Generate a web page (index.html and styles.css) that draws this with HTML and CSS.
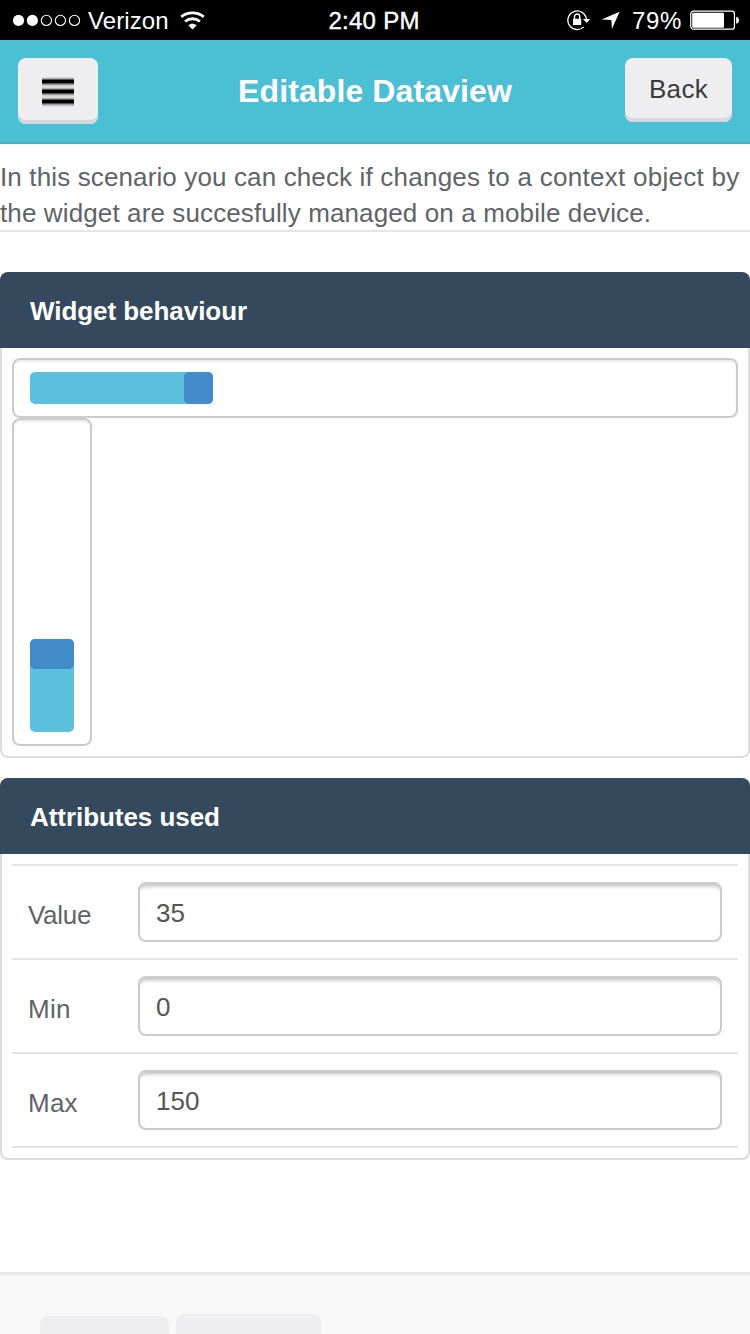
FILE: index.html
```html
<!DOCTYPE html>
<html lang="en">
<head>
<meta charset="utf-8">
<title>Editable Dataview</title>
<link rel="stylesheet" href="styles.css">
</head>
<body>
<div class="status">
  <div class="status-left">
    <svg class="signal" width="70" height="14" viewBox="0 0 70 14"><g fill="#fff"><circle cx="6.5" cy="7.4" r="5.6"/><circle cx="20.4" cy="7.4" r="5.6"/></g><g fill="none" stroke="#fff" stroke-width="1.1"><circle cx="34.4" cy="7.4" r="5.1"/><circle cx="48.4" cy="7.4" r="5.1"/><circle cx="62.5" cy="7.4" r="5.1"/></g></svg>
    <span class="carrier">Verizon</span>
    <svg class="wifi" width="26" height="19" viewBox="0 0 26 19" fill="none" stroke="#fff" stroke-width="2.8"><path d="M1.2 5.9C7.5 .6 17.5 .6 23.8 5.9M5.1 10.5C9.5 6.8 15.5 6.8 19.9 10.5"/><path d="M12.5 18.4 8.3 14.2C10.7 12.1 14.3 12.1 16.7 14.2Z" fill="#fff" stroke="none"/></svg>
  </div>
  <span class="time">2:40 PM</span>
  <div class="status-right">
    <svg class="lock" width="24" height="22" viewBox="0 0 24 22" fill="none" stroke="#fff"><path d="M16.7 17.9A9.3 9.3 0 1 1 19.4 10.1" stroke-width="1.3"/><path d="M16 9.9h7.2l-3.6 4.2Z" fill="#fff" stroke="none"/><path d="M6 9.7h8.2v6.3H6Z" fill="#fff" stroke="none"/><path d="M7.5 10.5V7.6a2.6 2.6 0 0 1 5.2 0V10.5" stroke-width="1.4"/></svg>
    <svg class="arrow" width="19" height="18" viewBox="0 0 19 18"><path d="M18.6.8 10.9 18 10.4 9 .6 8.5Z" fill="#fff"/></svg>
    <span class="percent">79%</span>
    <svg class="battery" width="50" height="20" viewBox="0 0 50 20"><rect x=".75" y="1.2" width="43.7" height="18" rx="2.8" fill="none" stroke="#fff" stroke-width="1.2"/><rect x="2.2" y="2.8" width="31.8" height="14.9" rx="1" fill="#fff"/><path d="M46.2 6.8Q48.9 7.3 48.9 10.3T46.2 13.8Z" fill="#fff"/></svg>
  </div>
</div>
<header class="header">
  <button class="btn menu" aria-label="Menu"><span class="bar"></span><span class="bar"></span><span class="bar"></span></button>
  <h1 class="title">Editable Dataview</h1>
  <button class="btn back">Back</button>
</header>
<main class="content">
  <p class="intro"><span class="intro-a">In this scenario you can check if </span><span class="intro-b">changes to a context object by</span><br><span class="intro-c">the widget are succesfully managed on a mobile device.</span></p>
  <section class="panel">
    <h2 class="heading">Widget behaviour</h2>
    <div class="body">
      <div class="slider horizontal"><div class="fill"><div class="handle"></div></div></div>
      <div class="slider vertical"><div class="fill"><div class="handle"></div></div></div>
    </div>
  </section>
  <section class="panel">
    <h2 class="heading">Attributes used</h2>
    <div class="body">
      <div class="rows">
        <label class="row"><span class="label label-value">Value</span><input class="input" value="35"></label>
        <label class="row"><span class="label">Min</span><input class="input" value="0"></label>
        <label class="row"><span class="label">Max</span><input class="input" value="150"></label>
      </div>
    </div>
  </section>
</main>
<footer class="footer"><div class="tab tab-first"></div><div class="tab tab-second"></div></footer>
</body>
</html>
```

FILE: styles.css
```css
* { box-sizing: border-box; }
html, body { height: 100%; }
body {
  margin: 0;
  display: flex;
  flex-direction: column;
  height: 1334px;
  overflow: hidden;
  background: #fff;
  color: #606468;
  font: 26px/36px "Liberation Sans", Arial, sans-serif;
}
svg { display: block; flex: none; }
.status {
  flex: none;
  height: 40px;
  display: grid;
  grid-template-columns: 1fr auto 1fr;
  padding: 0 10px 0 12px;
  background: #000;
  color: #fff;
  font-size: 24px;
  line-height: 40px;
  white-space: nowrap;
}
.status-left, .status-right { display: flex; align-items: center; height: 40px; }
.status-right { justify-content: flex-end; }
.carrier { width: 80px; margin-left: 6px; padding-top: 2px; letter-spacing: .1px; }
.wifi { margin-left: 12px; }
.time { width: 95px; padding-top: 1px; letter-spacing: .25px; -webkit-text-stroke: .4px #fff; }
.lock { margin-right: 10px; }
.arrow { margin-right: 12px; }
.percent { width: 50px; margin-right: 8px; padding-top: 2px; letter-spacing: .7px; }
.header {
  flex: none;
  height: 104px;
  display: flex;
  justify-content: space-between;
  align-items: flex-start;
  padding: 18px 18px 0;
  background: #4bbfd3;
  border-bottom: 2px solid #3eb3c8;
}
.title {
  margin: 0 0 0 27px;
  color: #fff;
  font-size: 32px;
  line-height: 66px;
  letter-spacing: .1px;
  white-space: nowrap;
}
.btn {
  border: 0;
  border-radius: 8px;
  background: #eeeef0;
  box-shadow: inset 0 -4px #d7d7de;
  color: #3a3a3d;
  font: 26px/60px "Liberation Sans", Arial, sans-serif;
}
.menu {
  width: 80px;
  height: 66px;
  display: flex;
  flex-direction: column;
  align-items: center;
  padding: 19px 0 0;
}
.bar {
  width: 32px;
  height: 10px;
  background: linear-gradient(#ddd 0 1px, #555 2.5px, #000 3px 6px, #555 6.5px, #bbb 8px, #ddd 9px);
}
.back { width: 107px; height: 64px; padding: 0 0 2px; letter-spacing: .35px; }
.content { flex: none; height: 1128px; padding-top: 15px; }
.intro { margin: 0 0 40px; height: 73px; border-bottom: 2px solid #e5e5e5; white-space: nowrap; }
.intro-a { letter-spacing: .13px; }
.intro-b { letter-spacing: .27px; }
.intro-c { letter-spacing: .12px; }
.panel {
  margin-bottom: 20px;
  border: 2px solid #ddd;
  border-top: 0;
  border-radius: 8px;
}
.heading {
  height: 76px;
  margin: 0 -2px;
  padding: 2px 30px 0;
  border-radius: 8px 8px 0 0;
  background: #34495e;
  color: #fff;
  font-size: 26px;
  line-height: 74px;
  letter-spacing: -.05px;
}
.body { padding: 10px; }
.slider, .input {
  border: 2px solid #ccc;
  border-radius: 8px;
  background: #fff;
}
.slider { display: flex; box-shadow: inset 0 2px 2px rgba(0,0,0,.075); }
.slider .fill { display: flex; border-radius: 5px; background: #5bc0de; }
.handle { border-radius: 5px; background: #428bca; }
.horizontal { height: 60px; padding: 12px 16px; }
.horizontal .fill { width: 183px; height: 32px; justify-content: flex-end; }
.horizontal .handle { width: 29px; }
.vertical { width: 80px; height: 328px; padding: 12px 16px; align-items: flex-end; }
.vertical .fill { width: 44px; height: 93px; }
.vertical .handle { width: 44px; height: 30px; }
.rows { border-bottom: 2px solid #e5e5e5; }
.row {
  height: 94px;
  display: flex;
  padding: 16px 16px 0;
  border-top: 2px solid #e5e5e5;
}
.label { width: 110px; padding-top: 15px; letter-spacing: .25px; }
.label-value { letter-spacing: -.3px; }
.input {
  flex: 1;
  min-width: 0;
  height: 60px;
  padding: 2px 16px 0;
  color: #555;
  font: 26px/54px "Liberation Sans", Arial, sans-serif;
  box-shadow: inset 0 6px 4px -4px #bbb;
}
.footer {
  flex: none;
  height: 62px;
  display: flex;
  gap: 7px;
  padding: 38px 40px 0;
  background: #f8f8f8;
  border-top: 2px solid #e5e5e5;
  box-shadow: inset 0 2px #eee;
}
.tab { border-radius: 8px 8px 0 0; background: #eeeef0; }
.tab-first { width: 129px; margin-top: 4px; }
.tab-second { width: 145px; margin-top: 2px; }
```
